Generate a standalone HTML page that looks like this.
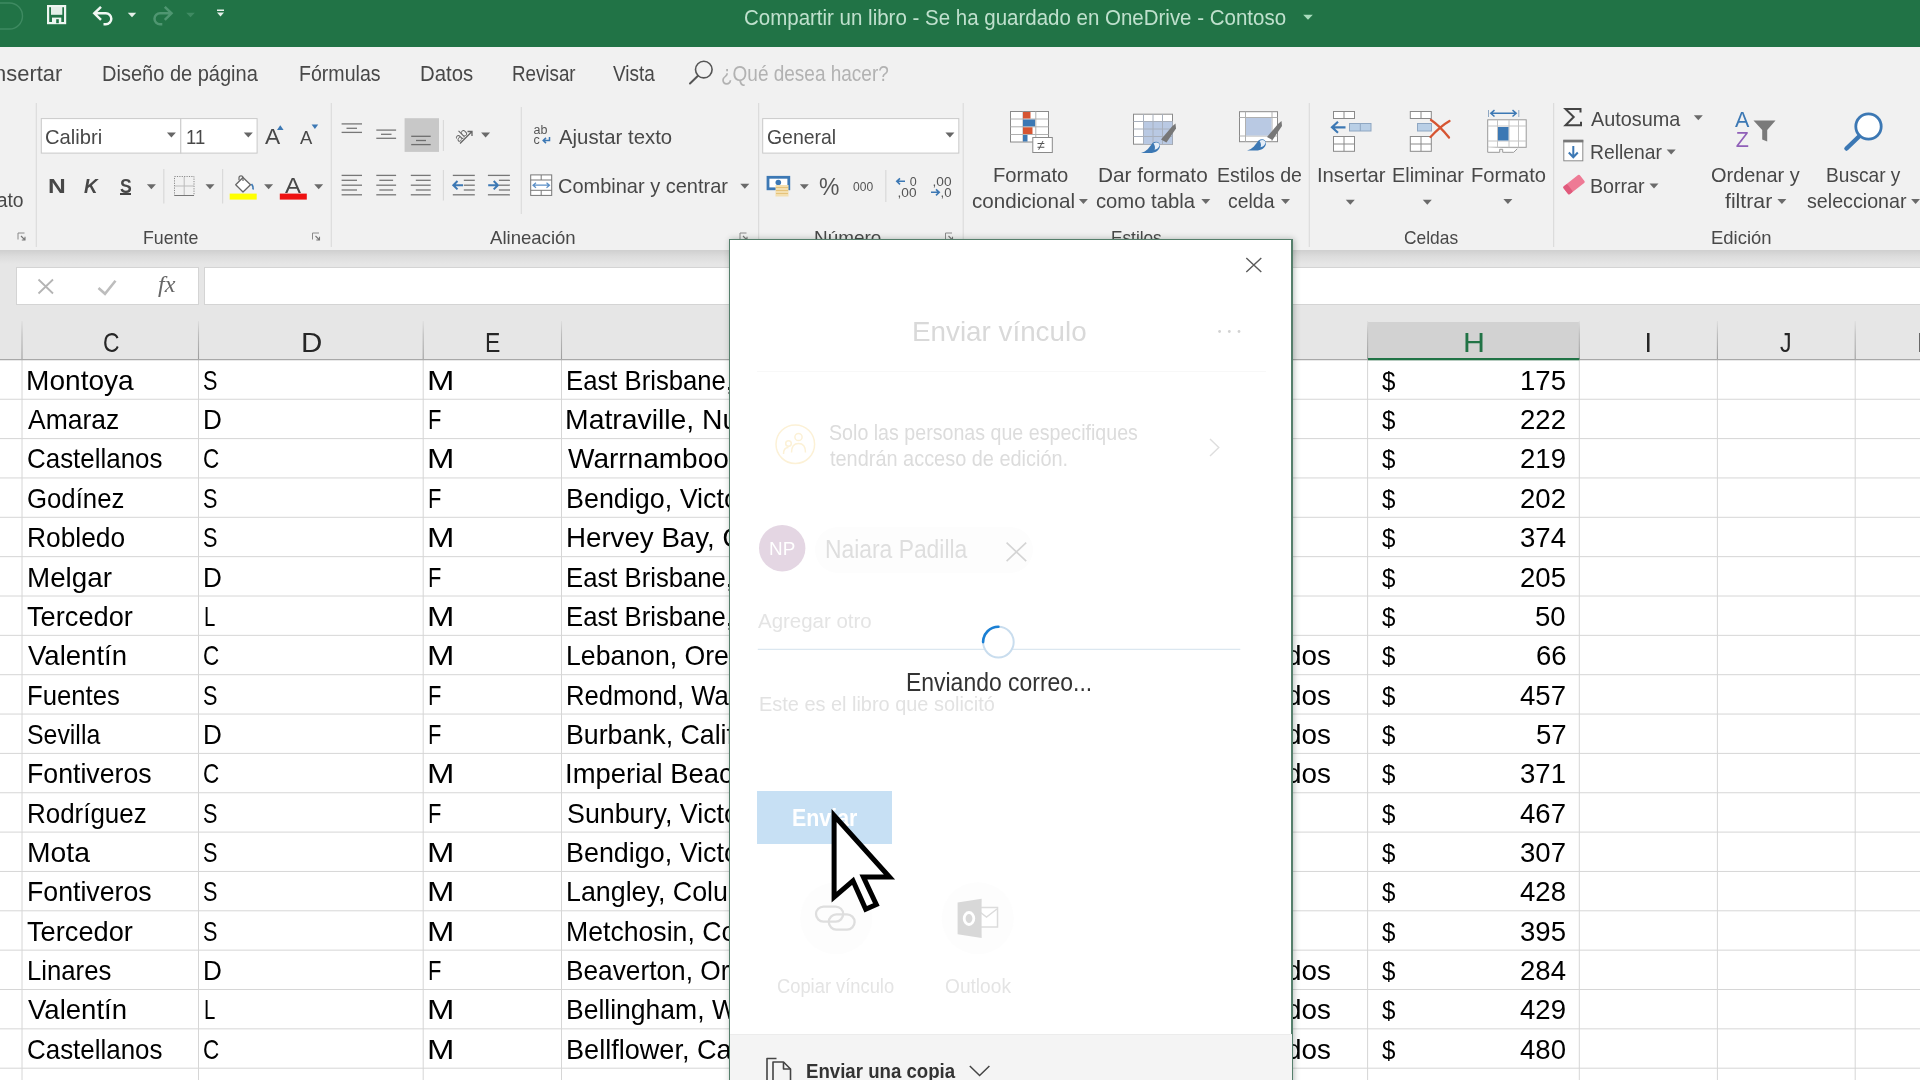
<!DOCTYPE html>
<html lang="es"><head><meta charset="utf-8"><title>Compartir un libro - Excel</title><style>
    html,body{margin:0;padding:0;background:#fff}
    body{width:1920px;height:1080px;overflow:hidden;position:relative;font-family:"Liberation Sans",sans-serif}
    #app{position:absolute;left:0;top:0;width:1920px;height:1080px;overflow:hidden;will-change:transform}
    .b{position:absolute;display:block}
    .t{position:absolute;white-space:nowrap;line-height:1;transform-origin:0 0;font-family:"Liberation Sans",sans-serif}
    </style></head>
<body>
<div id="app">
<div class="b" style="left:0;top:0;width:1920px;height:47px;background:#217346"></div>
<div class="b" style="left:0;top:47px;width:1920px;height:203px;background:#f1f1f1"></div>
<div class="b" style="left:0;top:250px;width:1920px;height:14px;background:linear-gradient(#cfcfcf,#dcdcdc 45%,#e6e6e6)"></div>
<div class="b" style="left:0;top:264px;width:1920px;height:96px;background:#e6e6e6"></div>
<div class="b" style="left:16.4px;top:266.9px;width:182.2px;height:38.5px;background:#fff;box-shadow:0 0 0 1px #d4d4d4 inset"></div>
<div class="b" style="left:204px;top:266.9px;width:1720px;height:38.5px;background:#fff;box-shadow:0 0 0 1px #d4d4d4 inset"></div>
<div class="b" style="left:1368px;top:322px;width:211.5px;height:36px;background:#d2d2d2;border-bottom:2px solid #217346"></div>
<svg class="b" style="left:0;top:0" width="1920" height="1080" viewBox="0 0 1920 1080"><defs><linearGradient id="hs" x1="0" y1="0" x2="0" y2="1"><stop offset="0" stop-color="#dedede"/><stop offset="0.35" stop-color="#bdbdbd"/><stop offset="1" stop-color="#9c9c9c"/></linearGradient></defs><line x1="0.00" y1="399.25" x2="1920.00" y2="399.25" stroke="#d6d6d6" stroke-width="1" /><line x1="0.00" y1="438.60" x2="1920.00" y2="438.60" stroke="#d6d6d6" stroke-width="1" /><line x1="0.00" y1="477.95" x2="1920.00" y2="477.95" stroke="#d6d6d6" stroke-width="1" /><line x1="0.00" y1="517.30" x2="1920.00" y2="517.30" stroke="#d6d6d6" stroke-width="1" /><line x1="0.00" y1="556.65" x2="1920.00" y2="556.65" stroke="#d6d6d6" stroke-width="1" /><line x1="0.00" y1="596.00" x2="1920.00" y2="596.00" stroke="#d6d6d6" stroke-width="1" /><line x1="0.00" y1="635.35" x2="1920.00" y2="635.35" stroke="#d6d6d6" stroke-width="1" /><line x1="0.00" y1="674.70" x2="1920.00" y2="674.70" stroke="#d6d6d6" stroke-width="1" /><line x1="0.00" y1="714.05" x2="1920.00" y2="714.05" stroke="#d6d6d6" stroke-width="1" /><line x1="0.00" y1="753.40" x2="1920.00" y2="753.40" stroke="#d6d6d6" stroke-width="1" /><line x1="0.00" y1="792.75" x2="1920.00" y2="792.75" stroke="#d6d6d6" stroke-width="1" /><line x1="0.00" y1="832.10" x2="1920.00" y2="832.10" stroke="#d6d6d6" stroke-width="1" /><line x1="0.00" y1="871.45" x2="1920.00" y2="871.45" stroke="#d6d6d6" stroke-width="1" /><line x1="0.00" y1="910.80" x2="1920.00" y2="910.80" stroke="#d6d6d6" stroke-width="1" /><line x1="0.00" y1="950.15" x2="1920.00" y2="950.15" stroke="#d6d6d6" stroke-width="1" /><line x1="0.00" y1="989.50" x2="1920.00" y2="989.50" stroke="#d6d6d6" stroke-width="1" /><line x1="0.00" y1="1028.85" x2="1920.00" y2="1028.85" stroke="#d6d6d6" stroke-width="1" /><line x1="0.00" y1="1068.20" x2="1920.00" y2="1068.20" stroke="#d6d6d6" stroke-width="1" /><line x1="22.00" y1="359.50" x2="22.00" y2="1080.00" stroke="#d6d6d6" stroke-width="1" /><rect x="21.45" y="321" width="1.1" height="38.6" fill="url(#hs)"/><line x1="198.50" y1="359.50" x2="198.50" y2="1080.00" stroke="#d6d6d6" stroke-width="1" /><rect x="197.95" y="321" width="1.1" height="38.6" fill="url(#hs)"/><line x1="423.20" y1="359.50" x2="423.20" y2="1080.00" stroke="#d6d6d6" stroke-width="1" /><rect x="422.65" y="321" width="1.1" height="38.6" fill="url(#hs)"/><line x1="561.50" y1="359.50" x2="561.50" y2="1080.00" stroke="#d6d6d6" stroke-width="1" /><rect x="560.95" y="321" width="1.1" height="38.6" fill="url(#hs)"/><line x1="1367.60" y1="359.50" x2="1367.60" y2="1080.00" stroke="#d6d6d6" stroke-width="1" /><rect x="1367.05" y="321" width="1.1" height="38.6" fill="url(#hs)"/><line x1="1579.30" y1="359.50" x2="1579.30" y2="1080.00" stroke="#d6d6d6" stroke-width="1" /><rect x="1578.75" y="321" width="1.1" height="38.6" fill="url(#hs)"/><line x1="1717.40" y1="359.50" x2="1717.40" y2="1080.00" stroke="#d6d6d6" stroke-width="1" /><rect x="1716.85" y="321" width="1.1" height="38.6" fill="url(#hs)"/><line x1="1855.20" y1="359.50" x2="1855.20" y2="1080.00" stroke="#d6d6d6" stroke-width="1" /><rect x="1854.65" y="321" width="1.1" height="38.6" fill="url(#hs)"/><line x1="0.00" y1="359.60" x2="1920.00" y2="359.60" stroke="#a8a8a8" stroke-width="1.3" /><line x1="1368.00" y1="359.30" x2="1579.30" y2="359.30" stroke="#217346" stroke-width="2" /></svg>
<span class="t" style="left:102.56px;top:330.00px;font-size:27.03px;color:#262626;transform:scaleX(0.8446);">C</span>
<span class="t" style="left:300.78px;top:330.00px;font-size:27.03px;color:#262626;transform:scaleX(1.0916);">D</span>
<span class="t" style="left:484.81px;top:330.00px;font-size:27.03px;color:#262626;transform:scaleX(0.8515);">E</span>
<span class="t" style="left:1463.21px;top:330.00px;font-size:27.03px;color:#217346;transform:scaleX(1.1249);">H</span>
<span class="t" style="left:1644.41px;top:330.00px;font-size:27.03px;color:#262626;transform:scaleX(1.0000);">I</span>
<span class="t" style="left:1780.35px;top:330.00px;font-size:27.03px;color:#262626;transform:scaleX(0.8550);">J</span>
<span class="t" style="left:1916.84px;top:330.00px;font-size:27.03px;color:#262626;transform:scaleX(1.0633);">K</span>
<span class="t" style="left:26.40px;top:368.00px;font-size:27.03px;color:#000;transform:scaleX(1.0395);">Montoya</span>
<span class="t" style="left:202.73px;top:368.00px;font-size:27.03px;color:#000;transform:scaleX(0.8013);">S</span>
<span class="t" style="left:427.00px;top:368.00px;font-size:27.03px;color:#000;transform:scaleX(1.2164);">M</span>
<span class="t" style="left:565.69px;top:368.00px;font-size:27.03px;color:#000;transform:scaleX(0.9504);">East Brisbane,</span>
<span class="t" style="left:1381.96px;top:368.00px;font-size:26.50px;color:#000;transform:scaleX(0.9096);">$</span>
<span class="t" style="left:1520.23px;top:368.00px;font-size:27.03px;color:#000;transform:scaleX(1.0200);">175</span>
<span class="t" style="left:27.65px;top:407.00px;font-size:27.03px;color:#000;transform:scaleX(0.9798);">Amaraz</span>
<span class="t" style="left:202.56px;top:407.00px;font-size:27.03px;color:#000;transform:scaleX(0.9668);">D</span>
<span class="t" style="left:428.41px;top:407.00px;font-size:27.03px;color:#000;transform:scaleX(0.8094);">F</span>
<span class="t" style="left:565.47px;top:407.00px;font-size:27.03px;color:#000;transform:scaleX(1.0499);">Matraville, Nu</span>
<span class="t" style="left:1381.96px;top:407.00px;font-size:26.50px;color:#000;transform:scaleX(0.9096);">$</span>
<span class="t" style="left:1520.48px;top:407.00px;font-size:27.03px;color:#000;transform:scaleX(1.0200);">222</span>
<span class="t" style="left:27.00px;top:446.00px;font-size:27.03px;color:#000;transform:scaleX(0.9595);">Castellanos</span>
<span class="t" style="left:203.07px;top:446.00px;font-size:27.03px;color:#000;transform:scaleX(0.8330);">C</span>
<span class="t" style="left:427.00px;top:446.00px;font-size:27.03px;color:#000;transform:scaleX(1.2164);">M</span>
<span class="t" style="left:567.69px;top:446.00px;font-size:27.03px;color:#000;transform:scaleX(1.0367);">Warrnamboo</span>
<span class="t" style="left:1381.96px;top:446.00px;font-size:26.50px;color:#000;transform:scaleX(0.9096);">$</span>
<span class="t" style="left:1520.40px;top:446.00px;font-size:27.03px;color:#000;transform:scaleX(1.0200);">219</span>
<span class="t" style="left:27.01px;top:486.00px;font-size:27.03px;color:#000;transform:scaleX(0.9536);">Godínez</span>
<span class="t" style="left:202.73px;top:486.00px;font-size:27.03px;color:#000;transform:scaleX(0.8013);">S</span>
<span class="t" style="left:428.41px;top:486.00px;font-size:27.03px;color:#000;transform:scaleX(0.8094);">F</span>
<span class="t" style="left:565.59px;top:486.00px;font-size:27.03px;color:#000;transform:scaleX(0.9954);">Bendigo, Victo</span>
<span class="t" style="left:1381.96px;top:486.00px;font-size:26.50px;color:#000;transform:scaleX(0.9096);">$</span>
<span class="t" style="left:1520.48px;top:486.00px;font-size:27.03px;color:#000;transform:scaleX(1.0200);">202</span>
<span class="t" style="left:27.14px;top:525.00px;font-size:27.03px;color:#000;transform:scaleX(0.9745);">Robledo</span>
<span class="t" style="left:202.73px;top:525.00px;font-size:27.03px;color:#000;transform:scaleX(0.8013);">S</span>
<span class="t" style="left:427.00px;top:525.00px;font-size:27.03px;color:#000;transform:scaleX(1.2164);">M</span>
<span class="t" style="left:565.53px;top:525.00px;font-size:27.03px;color:#000;transform:scaleX(1.0250);">Hervey Bay, Q</span>
<span class="t" style="left:1381.96px;top:525.00px;font-size:26.50px;color:#000;transform:scaleX(0.9096);">$</span>
<span class="t" style="left:1519.90px;top:525.00px;font-size:27.03px;color:#000;transform:scaleX(1.0200);">374</span>
<span class="t" style="left:27.02px;top:565.00px;font-size:27.03px;color:#000;transform:scaleX(1.0288);">Melgar</span>
<span class="t" style="left:202.56px;top:565.00px;font-size:27.03px;color:#000;transform:scaleX(0.9668);">D</span>
<span class="t" style="left:428.41px;top:565.00px;font-size:27.03px;color:#000;transform:scaleX(0.8094);">F</span>
<span class="t" style="left:565.69px;top:565.00px;font-size:27.03px;color:#000;transform:scaleX(0.9504);">East Brisbane,</span>
<span class="t" style="left:1381.96px;top:565.00px;font-size:26.50px;color:#000;transform:scaleX(0.9096);">$</span>
<span class="t" style="left:1520.23px;top:565.00px;font-size:27.03px;color:#000;transform:scaleX(1.0200);">205</span>
<span class="t" style="left:27.10px;top:604.00px;font-size:27.03px;color:#000;transform:scaleX(1.0071);">Tercedor</span>
<span class="t" style="left:203.53px;top:604.00px;font-size:27.03px;color:#000;transform:scaleX(0.7549);">L</span>
<span class="t" style="left:427.00px;top:604.00px;font-size:27.03px;color:#000;transform:scaleX(1.2164);">M</span>
<span class="t" style="left:565.69px;top:604.00px;font-size:27.03px;color:#000;transform:scaleX(0.9504);">East Brisbane,</span>
<span class="t" style="left:1381.96px;top:604.00px;font-size:26.50px;color:#000;transform:scaleX(0.9096);">$</span>
<span class="t" style="left:1535.48px;top:604.00px;font-size:27.03px;color:#000;transform:scaleX(1.0200);">50</span>
<span class="t" style="left:27.59px;top:643.00px;font-size:27.03px;color:#000;transform:scaleX(1.0194);">Valentín</span>
<span class="t" style="left:203.07px;top:643.00px;font-size:27.03px;color:#000;transform:scaleX(0.8330);">C</span>
<span class="t" style="left:427.00px;top:643.00px;font-size:27.03px;color:#000;transform:scaleX(1.2164);">M</span>
<span class="t" style="left:565.61px;top:643.00px;font-size:27.03px;color:#000;transform:scaleX(0.9862);">Lebanon, Ore</span>
<span class="t" style="left:1381.96px;top:643.00px;font-size:26.50px;color:#000;transform:scaleX(0.9096);">$</span>
<span class="t" style="left:1535.62px;top:643.00px;font-size:27.03px;color:#000;transform:scaleX(1.0200);">66</span>
<span class="t" style="left:1285.81px;top:643.00px;font-size:27.03px;color:#000;transform:scaleX(1.0300);">dos</span>
<span class="t" style="left:27.19px;top:683.00px;font-size:27.03px;color:#000;transform:scaleX(0.9515);">Fuentes</span>
<span class="t" style="left:202.73px;top:683.00px;font-size:27.03px;color:#000;transform:scaleX(0.8013);">S</span>
<span class="t" style="left:428.41px;top:683.00px;font-size:27.03px;color:#000;transform:scaleX(0.8094);">F</span>
<span class="t" style="left:565.70px;top:683.00px;font-size:27.03px;color:#000;transform:scaleX(0.9480);">Redmond, Wa</span>
<span class="t" style="left:1381.96px;top:683.00px;font-size:26.50px;color:#000;transform:scaleX(0.9096);">$</span>
<span class="t" style="left:1520.48px;top:683.00px;font-size:27.03px;color:#000;transform:scaleX(1.0200);">457</span>
<span class="t" style="left:1285.81px;top:683.00px;font-size:27.03px;color:#000;transform:scaleX(1.0300);">dos</span>
<span class="t" style="left:26.58px;top:722.00px;font-size:27.03px;color:#000;transform:scaleX(0.9203);">Sevilla</span>
<span class="t" style="left:202.56px;top:722.00px;font-size:27.03px;color:#000;transform:scaleX(0.9668);">D</span>
<span class="t" style="left:428.41px;top:722.00px;font-size:27.03px;color:#000;transform:scaleX(0.8094);">F</span>
<span class="t" style="left:565.61px;top:722.00px;font-size:27.03px;color:#000;transform:scaleX(0.9901);">Burbank, Calif</span>
<span class="t" style="left:1381.96px;top:722.00px;font-size:26.50px;color:#000;transform:scaleX(0.9096);">$</span>
<span class="t" style="left:1535.81px;top:722.00px;font-size:27.03px;color:#000;transform:scaleX(1.0200);">57</span>
<span class="t" style="left:1285.81px;top:722.00px;font-size:27.03px;color:#000;transform:scaleX(1.0300);">dos</span>
<span class="t" style="left:27.11px;top:761.00px;font-size:27.03px;color:#000;transform:scaleX(0.9885);">Fontiveros</span>
<span class="t" style="left:203.07px;top:761.00px;font-size:27.03px;color:#000;transform:scaleX(0.8330);">C</span>
<span class="t" style="left:427.00px;top:761.00px;font-size:27.03px;color:#000;transform:scaleX(1.2164);">M</span>
<span class="t" style="left:565.27px;top:761.00px;font-size:27.03px;color:#000;transform:scaleX(1.0160);">Imperial Beac</span>
<span class="t" style="left:1381.96px;top:761.00px;font-size:26.50px;color:#000;transform:scaleX(0.9096);">$</span>
<span class="t" style="left:1520.43px;top:761.00px;font-size:27.03px;color:#000;transform:scaleX(1.0200);">371</span>
<span class="t" style="left:1285.81px;top:761.00px;font-size:27.03px;color:#000;transform:scaleX(1.0300);">dos</span>
<span class="t" style="left:27.17px;top:801.00px;font-size:27.03px;color:#000;transform:scaleX(0.9596);">Rodríguez</span>
<span class="t" style="left:202.73px;top:801.00px;font-size:27.03px;color:#000;transform:scaleX(0.8013);">S</span>
<span class="t" style="left:428.41px;top:801.00px;font-size:27.03px;color:#000;transform:scaleX(0.8094);">F</span>
<span class="t" style="left:566.59px;top:801.00px;font-size:27.03px;color:#000;transform:scaleX(0.9925);">Sunbury, Victo</span>
<span class="t" style="left:1381.96px;top:801.00px;font-size:26.50px;color:#000;transform:scaleX(0.9096);">$</span>
<span class="t" style="left:1520.48px;top:801.00px;font-size:27.03px;color:#000;transform:scaleX(1.0200);">467</span>
<span class="t" style="left:26.98px;top:840.00px;font-size:27.03px;color:#000;transform:scaleX(1.0465);">Mota</span>
<span class="t" style="left:202.73px;top:840.00px;font-size:27.03px;color:#000;transform:scaleX(0.8013);">S</span>
<span class="t" style="left:427.00px;top:840.00px;font-size:27.03px;color:#000;transform:scaleX(1.2164);">M</span>
<span class="t" style="left:565.59px;top:840.00px;font-size:27.03px;color:#000;transform:scaleX(0.9954);">Bendigo, Victo</span>
<span class="t" style="left:1381.96px;top:840.00px;font-size:26.50px;color:#000;transform:scaleX(0.9096);">$</span>
<span class="t" style="left:1520.48px;top:840.00px;font-size:27.03px;color:#000;transform:scaleX(1.0200);">307</span>
<span class="t" style="left:27.11px;top:879.00px;font-size:27.03px;color:#000;transform:scaleX(0.9885);">Fontiveros</span>
<span class="t" style="left:202.73px;top:879.00px;font-size:27.03px;color:#000;transform:scaleX(0.8013);">S</span>
<span class="t" style="left:427.00px;top:879.00px;font-size:27.03px;color:#000;transform:scaleX(1.2164);">M</span>
<span class="t" style="left:565.60px;top:879.00px;font-size:27.03px;color:#000;transform:scaleX(0.9924);">Langley, Colum</span>
<span class="t" style="left:1381.96px;top:879.00px;font-size:26.50px;color:#000;transform:scaleX(0.9096);">$</span>
<span class="t" style="left:1520.29px;top:879.00px;font-size:27.03px;color:#000;transform:scaleX(1.0200);">428</span>
<span class="t" style="left:27.10px;top:919.00px;font-size:27.03px;color:#000;transform:scaleX(1.0071);">Tercedor</span>
<span class="t" style="left:202.73px;top:919.00px;font-size:27.03px;color:#000;transform:scaleX(0.8013);">S</span>
<span class="t" style="left:427.00px;top:919.00px;font-size:27.03px;color:#000;transform:scaleX(1.2164);">M</span>
<span class="t" style="left:565.61px;top:919.00px;font-size:27.03px;color:#000;transform:scaleX(0.9862);">Metchosin, Co</span>
<span class="t" style="left:1381.96px;top:919.00px;font-size:26.50px;color:#000;transform:scaleX(0.9096);">$</span>
<span class="t" style="left:1520.23px;top:919.00px;font-size:27.03px;color:#000;transform:scaleX(1.0200);">395</span>
<span class="t" style="left:27.19px;top:958.00px;font-size:27.03px;color:#000;transform:scaleX(0.9511);">Linares</span>
<span class="t" style="left:202.56px;top:958.00px;font-size:27.03px;color:#000;transform:scaleX(0.9668);">D</span>
<span class="t" style="left:428.41px;top:958.00px;font-size:27.03px;color:#000;transform:scaleX(0.8094);">F</span>
<span class="t" style="left:565.65px;top:958.00px;font-size:27.03px;color:#000;transform:scaleX(0.9719);">Beaverton, Or</span>
<span class="t" style="left:1381.96px;top:958.00px;font-size:26.50px;color:#000;transform:scaleX(0.9096);">$</span>
<span class="t" style="left:1519.90px;top:958.00px;font-size:27.03px;color:#000;transform:scaleX(1.0200);">284</span>
<span class="t" style="left:1285.81px;top:958.00px;font-size:27.03px;color:#000;transform:scaleX(1.0300);">dos</span>
<span class="t" style="left:27.59px;top:997.00px;font-size:27.03px;color:#000;transform:scaleX(1.0194);">Valentín</span>
<span class="t" style="left:203.53px;top:997.00px;font-size:27.03px;color:#000;transform:scaleX(0.7549);">L</span>
<span class="t" style="left:427.00px;top:997.00px;font-size:27.03px;color:#000;transform:scaleX(1.2164);">M</span>
<span class="t" style="left:565.62px;top:997.00px;font-size:27.03px;color:#000;transform:scaleX(0.9816);">Bellingham, W</span>
<span class="t" style="left:1381.96px;top:997.00px;font-size:26.50px;color:#000;transform:scaleX(0.9096);">$</span>
<span class="t" style="left:1520.40px;top:997.00px;font-size:27.03px;color:#000;transform:scaleX(1.0200);">429</span>
<span class="t" style="left:1285.81px;top:997.00px;font-size:27.03px;color:#000;transform:scaleX(1.0300);">dos</span>
<span class="t" style="left:27.00px;top:1037.00px;font-size:27.03px;color:#000;transform:scaleX(0.9595);">Castellanos</span>
<span class="t" style="left:203.07px;top:1037.00px;font-size:27.03px;color:#000;transform:scaleX(0.8330);">C</span>
<span class="t" style="left:427.00px;top:1037.00px;font-size:27.03px;color:#000;transform:scaleX(1.2164);">M</span>
<span class="t" style="left:565.58px;top:1037.00px;font-size:27.03px;color:#000;transform:scaleX(1.0026);">Bellflower, Ca</span>
<span class="t" style="left:1381.96px;top:1037.00px;font-size:26.50px;color:#000;transform:scaleX(0.9096);">$</span>
<span class="t" style="left:1520.15px;top:1037.00px;font-size:27.03px;color:#000;transform:scaleX(1.0200);">480</span>
<span class="t" style="left:1285.81px;top:1037.00px;font-size:27.03px;color:#000;transform:scaleX(1.0300);">dos</span>
<svg class="b" style="left:0;top:0" width="1920" height="260" viewBox="0 0 1920 260"><rect x="-30" y="3" width="52.5" height="26" rx="13" fill="none" stroke="#3e8a61" stroke-width="1.4"/><rect x="48.1" y="6.1" width="17" height="17" fill="none" stroke="#eef6f1" stroke-width="2.2"/><rect x="51" y="7" width="11.300" height="7.800" fill="#e3efe8"/><rect x="52" y="17.600" width="9.300" height="5.500" fill="#eef6f1"/><rect x="56.200" y="19.200" width="2.600" height="4" fill="#217346"/><path d="M101 6.800L94.300 13.300 101 19.800M95 13.300h10.800a5.500 5.500 0 0 1 0 11h-2.300" fill="none" stroke="#f2f8f4" stroke-width="2.500" stroke-linecap="butt" stroke-linejoin="miter"/><polygon points="127.8,12.8 136.2,12.8 132.0,17.2" fill="#e6f0ea"/><path d="M164.800 6.800l6.700 6.500-6.700 6.500M170.800 13.300h-10.800a5.500 5.500 0 0 0 0 11h2.300" fill="none" stroke="#4f9671" stroke-width="2.500"/><polygon points="186.2,12.8 194.8,12.8 190.5,17.2" fill="#3f8a62"/><rect x="217.00" y="9.50" width="7.00" height="1.50" fill="#e6f0ea" /><polygon points="217.0,12.5 224.0,12.5 220.5,16.5" fill="#e6f0ea"/><polygon points="1303.2,14.7 1312.8,14.7 1308.0,19.7" fill="#a9dcbd"/><circle cx="703.8" cy="69.6" r="8.3" fill="none" stroke="#555" stroke-width="1.6"/><path d="M698 75.8L690 83.5" stroke="#555" stroke-width="2" stroke-linecap="round"/><line x1="36.30" y1="103.00" x2="36.30" y2="247.00" stroke="#dcdcdc" stroke-width="1.2" /><line x1="331.30" y1="103.00" x2="331.30" y2="247.00" stroke="#dcdcdc" stroke-width="1.2" /><line x1="758.60" y1="103.00" x2="758.60" y2="247.00" stroke="#dcdcdc" stroke-width="1.2" /><line x1="963.20" y1="103.00" x2="963.20" y2="247.00" stroke="#dcdcdc" stroke-width="1.2" /><line x1="1309.30" y1="103.00" x2="1309.30" y2="247.00" stroke="#dcdcdc" stroke-width="1.2" /><line x1="1553.60" y1="103.00" x2="1553.60" y2="247.00" stroke="#dcdcdc" stroke-width="1.2" /><line x1="521.30" y1="107.00" x2="521.30" y2="214.00" stroke="#dcdcdc" stroke-width="1.2" /><line x1="163.80" y1="169.00" x2="163.80" y2="203.50" stroke="#dadada" stroke-width="1.2" /><line x1="222.60" y1="169.00" x2="222.60" y2="203.50" stroke="#dadada" stroke-width="1.2" /><line x1="443.40" y1="120.00" x2="443.40" y2="151.00" stroke="#dadada" stroke-width="1.2" /><line x1="443.40" y1="170.00" x2="443.40" y2="200.50" stroke="#dadada" stroke-width="1.2" /><line x1="885.80" y1="170.00" x2="885.80" y2="202.00" stroke="#dadada" stroke-width="1.2" /><rect x="41.3" y="118.6" width="139.5" height="34.5" fill="#fff" stroke="#c9c9c9" stroke-width="1"/><rect x="180.8" y="118.6" width="76.3" height="34.5" fill="#fff" stroke="#c9c9c9" stroke-width="1"/><rect x="762.7" y="118.6" width="196.1" height="34.5" fill="#fff" stroke="#c9c9c9" stroke-width="1"/><polygon points="166.9,132.5 175.9,132.5 171.4,137.5" fill="#666"/><polygon points="243.8,132.5 252.8,132.5 248.3,137.5" fill="#666"/><polygon points="945.4,132.5 954.4,132.5 949.9,137.5" fill="#666"/><polygon points="146.9,184.3 155.9,184.3 151.4,189.3" fill="#6a6a6a"/><polygon points="205.5,184.3 214.5,184.3 210.0,189.3" fill="#6a6a6a"/><polygon points="264.1,184.3 273.1,184.3 268.6,189.3" fill="#6a6a6a"/><polygon points="314.2,184.3 323.2,184.3 318.7,189.3" fill="#6a6a6a"/><polygon points="481.1,132.4 490.1,132.4 485.6,137.4" fill="#6a6a6a"/><polygon points="740.3,183.7 749.3,183.7 744.8,188.7" fill="#6a6a6a"/><polygon points="799.8,184.3 808.8,184.3 804.3,189.3" fill="#6a6a6a"/><polygon points="1078.9,199.0 1087.9,199.0 1083.4,204.0" fill="#6a6a6a"/><polygon points="1201.3,199.0 1210.3,199.0 1205.8,204.0" fill="#6a6a6a"/><polygon points="1281.0,199.0 1290.0,199.0 1285.5,204.0" fill="#6a6a6a"/><polygon points="1345.8,199.7 1354.8,199.7 1350.3,204.7" fill="#6a6a6a"/><polygon points="1422.8,199.7 1431.8,199.7 1427.3,204.7" fill="#6a6a6a"/><polygon points="1503.4,199.0 1512.4,199.0 1507.9,204.0" fill="#6a6a6a"/><polygon points="1693.8,115.2 1702.8,115.2 1698.3,120.2" fill="#6a6a6a"/><polygon points="1666.7,149.4 1675.7,149.4 1671.2,154.4" fill="#6a6a6a"/><polygon points="1649.5,183.4 1658.5,183.4 1654.0,188.4" fill="#6a6a6a"/><polygon points="1777.4,199.0 1786.4,199.0 1781.9,204.0" fill="#6a6a6a"/><polygon points="1911.1,199.0 1920.1,199.0 1915.6,204.0" fill="#6a6a6a"/><polygon points="277,130 283.6,130 280.3,125.3" fill="#3c78b4"/><polygon points="311.6,124.5 318.2,124.5 314.9,129" fill="#3c78b4"/><g fill="none" stroke="#8a8a8a" stroke-width="1"><rect x="174.5" y="176.5" width="19.5" height="19" stroke-dasharray="1.2 1.2"/><path d="M184.2 177v18.5M175 186h19" stroke="#bbb"/><path d="M174.5 195.5h19.5" stroke="#777"/></g><rect x="229.70" y="193.60" width="27.00" height="6.00" fill="#ffff00" /><g fill="#fff" stroke="#666" stroke-width="1.3" stroke-linejoin="round"><path d="M243 177.5l7.5 7.2-7.5 7.3-7.3-7.3z"/></g><path d="M243 181v-3.2a2 2 0 0 0-4 0v2.4" fill="none" stroke="#666" stroke-width="1.2"/><path d="M251.5 184c1.4 1.6 2 3 1.6 5.5" fill="none" stroke="#3c78b4" stroke-width="1.8"/><rect x="279.80" y="193.60" width="27.00" height="6.00" fill="#ee1111" /><line x1="341.60" y1="123.90" x2="362.00" y2="123.90" stroke="#777" stroke-width="1.3" /><line x1="346.50" y1="128.30" x2="357.00" y2="128.30" stroke="#777" stroke-width="1.3" /><line x1="341.60" y1="132.40" x2="362.00" y2="132.40" stroke="#777" stroke-width="1.3" /><line x1="376.30" y1="130.10" x2="396.10" y2="130.10" stroke="#777" stroke-width="1.3" /><line x1="381.00" y1="134.30" x2="391.50" y2="134.30" stroke="#777" stroke-width="1.3" /><line x1="376.30" y1="138.30" x2="396.10" y2="138.30" stroke="#777" stroke-width="1.3" /><rect x="404.60" y="118.20" width="34.40" height="33.70" fill="#c8c8c8" /><line x1="411.20" y1="136.30" x2="430.70" y2="136.30" stroke="#6e6e6e" stroke-width="1.3" /><line x1="416.00" y1="140.50" x2="426.00" y2="140.50" stroke="#6e6e6e" stroke-width="1.3" /><line x1="411.20" y1="144.60" x2="430.70" y2="144.60" stroke="#6e6e6e" stroke-width="1.3" /><line x1="341.60" y1="175.40" x2="362.00" y2="175.40" stroke="#777" stroke-width="1.3" /><line x1="376.30" y1="175.40" x2="396.10" y2="175.40" stroke="#777" stroke-width="1.3" /><line x1="410.80" y1="175.40" x2="430.70" y2="175.40" stroke="#777" stroke-width="1.3" /><line x1="341.60" y1="180.30" x2="357.00" y2="180.30" stroke="#777" stroke-width="1.3" /><line x1="379.30" y1="180.30" x2="393.10" y2="180.30" stroke="#777" stroke-width="1.3" /><line x1="415.80" y1="180.30" x2="430.70" y2="180.30" stroke="#777" stroke-width="1.3" /><line x1="341.60" y1="185.20" x2="362.00" y2="185.20" stroke="#777" stroke-width="1.3" /><line x1="376.30" y1="185.20" x2="396.10" y2="185.20" stroke="#777" stroke-width="1.3" /><line x1="410.80" y1="185.20" x2="430.70" y2="185.20" stroke="#777" stroke-width="1.3" /><line x1="341.60" y1="190.00" x2="357.00" y2="190.00" stroke="#777" stroke-width="1.3" /><line x1="379.30" y1="190.00" x2="393.10" y2="190.00" stroke="#777" stroke-width="1.3" /><line x1="415.80" y1="190.00" x2="430.70" y2="190.00" stroke="#777" stroke-width="1.3" /><line x1="341.60" y1="194.80" x2="362.00" y2="194.80" stroke="#777" stroke-width="1.3" /><line x1="376.30" y1="194.80" x2="396.10" y2="194.80" stroke="#777" stroke-width="1.3" /><line x1="410.80" y1="194.80" x2="430.70" y2="194.80" stroke="#777" stroke-width="1.3" /><line x1="452.80" y1="175.40" x2="474.80" y2="175.40" stroke="#777" stroke-width="1.3" /><line x1="452.80" y1="194.80" x2="474.80" y2="194.80" stroke="#777" stroke-width="1.3" /><line x1="463.80" y1="180.30" x2="474.80" y2="180.30" stroke="#777" stroke-width="1.3" /><line x1="463.80" y1="185.20" x2="474.80" y2="185.20" stroke="#777" stroke-width="1.3" /><line x1="463.80" y1="190.00" x2="474.80" y2="190.00" stroke="#777" stroke-width="1.3" /><line x1="487.90" y1="175.40" x2="509.90" y2="175.40" stroke="#777" stroke-width="1.3" /><line x1="487.90" y1="194.80" x2="509.90" y2="194.80" stroke="#777" stroke-width="1.3" /><line x1="498.90" y1="180.30" x2="509.90" y2="180.30" stroke="#777" stroke-width="1.3" /><line x1="498.90" y1="185.20" x2="509.90" y2="185.20" stroke="#777" stroke-width="1.3" /><line x1="498.90" y1="190.00" x2="509.90" y2="190.00" stroke="#777" stroke-width="1.3" /><path d="M463 185.2h-9.5m4-4.2l-4.2 4.2 4.2 4.2" fill="none" stroke="#3c78b4" stroke-width="2"/><path d="M488.2 185.2h9.5m-4-4.2l4.2 4.2-4.2 4.2" fill="none" stroke="#3c78b4" stroke-width="2"/><g transform="translate(464,135) rotate(-45)"><text x="-9" y="2" font-family="Liberation Sans, sans-serif" font-size="12" fill="#666">ab</text></g><path d="M460 143.5l12-12m-4.5 0h4.5v4.5" fill="none" stroke="#666" stroke-width="1.3"/><text x="533.6" y="134" font-family="Liberation Sans, sans-serif" font-size="12.5" fill="#555">ab</text><text x="533.6" y="144.3" font-family="Liberation Sans, sans-serif" font-size="12.5" fill="#555">c</text><path d="M549.5 137v3.5h-6m2.5-2.6l-2.8 2.6 2.8 2.6" fill="none" stroke="#3c78b4" stroke-width="1.5"/><g fill="#fff" stroke="#777" stroke-width="1"><rect x="530.7" y="174.9" width="21" height="20.5"/><path d="M530.7 180h21M530.7 190.3h21M541.2 175v5M541.2 190.3v5" fill="none"/></g><path d="M533 185.2h16.5m-13.5-2.5l-3 2.5 3 2.5m10.5-5l3 2.5-3 2.5" fill="none" stroke="#5b8fc7" stroke-width="1.2"/><rect x="768" y="177.300" width="20.800" height="11.500" fill="#fff" stroke="#3c78b4" stroke-width="2.800"/><circle cx="778.3" cy="182.5" r="2.8" fill="#3c78b4"/><rect x="775.5" y="185" width="13" height="11.5" fill="#f3dfb0"/><path d="M776 187.5h12M776 190.5h12M776 193.5h12" stroke="#e6c37a" stroke-width="1.2"/><text x="909.800" y="186.300" font-family="Liberation Sans, sans-serif" font-size="12.5" fill="#555">0</text><text x="897.500" y="197.200" font-family="Liberation Sans, sans-serif" font-size="12.5" fill="#555" textLength="19" lengthAdjust="spacingAndGlyphs">,00</text><path d="M905 181.3h-8m3-3l-3.2 3 3.2 3" fill="none" stroke="#3c78b4" stroke-width="1.6"/><text x="932.500" y="186.300" font-family="Liberation Sans, sans-serif" font-size="12.5" fill="#555" textLength="19" lengthAdjust="spacingAndGlyphs">,00</text><text x="940.500" y="197.200" font-family="Liberation Sans, sans-serif" font-size="12.5" fill="#555" textLength="11" lengthAdjust="spacingAndGlyphs">,0</text><path d="M931 192.3h8m-3-3l3.2 3-3.2 3" fill="none" stroke="#3c78b4" stroke-width="1.6"/><path d="M18.0 239.5v-6.5h6.5" fill="none" stroke="#8a8a8a" stroke-width="1"/><path d="M21.0 236.0l4 4m0-3.2v3.2h-3.2" fill="none" stroke="#777" stroke-width="1.1"/><path d="M312.5 239.5v-6.5h6.5" fill="none" stroke="#8a8a8a" stroke-width="1"/><path d="M315.5 236.0l4 4m0-3.2v3.2h-3.2" fill="none" stroke="#777" stroke-width="1.1"/><path d="M740.0 239.5v-6.5h6.5" fill="none" stroke="#8a8a8a" stroke-width="1"/><path d="M743.0 236.0l4 4m0-3.2v3.2h-3.2" fill="none" stroke="#777" stroke-width="1.1"/><path d="M945.5 239.5v-6.5h6.5" fill="none" stroke="#8a8a8a" stroke-width="1"/><path d="M948.5 236.0l4 4m0-3.2v3.2h-3.2" fill="none" stroke="#777" stroke-width="1.1"/><g><rect x="1010.5" y="111.5" width="38" height="30.5" fill="#fff" stroke="#8a8a8a"/><path d="M1023 111.5v30.5M1035.8 111.5v30.5M1010.5 119h38M1010.5 126.8h38M1010.5 134.5h38" stroke="#b0b0b0" fill="none"/><rect x="1023" y="112" width="7.5" height="6.5" fill="#d65532"/><rect x="1023" y="119.5" width="12" height="6.8" fill="#3c78b4"/><rect x="1023" y="127.3" width="9.5" height="6.7" fill="#d65532"/><rect x="1023" y="135" width="4.5" height="6.5" fill="#3c78b4"/><rect x="1032.8" y="137.5" width="19.5" height="15" fill="#fff" stroke="#8a8a8a"/><text x="1037.3" y="150.3" font-family="Liberation Sans, sans-serif" font-size="14" fill="#555">≠</text></g><g><rect x="1133.5" y="114.2" width="39" height="30" fill="#fff" stroke="#8a8a8a"/><rect x="1143.5" y="121.5" width="29" height="22.7" fill="#b9c9e3"/><path d="M1143.5 114.2v30M1153 114.2v30M1162.5 114.2v30M1133.5 121.5h39M1133.5 129h39M1133.5 136.5h39" stroke="#a8b0bd" fill="none"/><path d="M1161 139.5l11-13 3.5-3 0.5 5-9.5 14z" fill="#777"/><path d="M1141 153c6-1.5 8-5.5 11.5-10 3-2.5 7.5-1.5 7.5 2.5 0 5-5 7.500-10 7.500z" fill="#3c78b4"/><path d="M1153.500 143.500c2.500-2 6-1 6.200 1.800-1 2.800-3 4.200-5.200 4.500 1-2 0.500-4.300-1-6.300z" fill="#e4edf7"/></g><g><rect x="1239.5" y="111.7" width="38" height="30" fill="#fff" stroke="#8a8a8a"/><path d="M1245.500 111.7v30M1272 111.7v30M1239.500 117.500h38M1239.500 136h38" stroke="#b0b0b0" fill="none"/><rect x="1246" y="118" width="25.500" height="17.500" fill="#b9c9e3"/><path d="M1267 137l11-13 3.500-3 0.500 5-9.500 14z" fill="#777"/><path d="M1247 150.500c6-1.500 8-5.500 11.500-10 3-2.500 7.500-1.500 7.500 2.500 0 5-5 7.500-10 7.500z" fill="#3c78b4"/><path d="M1259.500 141c2.500-2 6-1 6.200 1.800-1 2.800-3 4.200-5.200 4.500 1-2 0.500-4.300-1-6.300z" fill="#e4edf7"/></g><g fill="#fff" stroke="#8a8a8a"><rect x="1333.500" y="111.500" width="21" height="7"/><path d="M1344 111.500v7"/><rect x="1333.500" y="136.500" width="21" height="14.800"/><path d="M1344 136.500v14.800M1333.500 144h21"/><rect x="1349.500" y="123.500" width="21.500" height="7.500" fill="#b9cfe6" stroke="#8fa7c2"/><path d="M1360.300 123.500v7.500" stroke="#8fa7c2"/></g><path d="M1345.500 127.300h-13.500m6-5.500l-6 5.500 6 5.500" fill="none" stroke="#3c78b4" stroke-width="2.200"/><g fill="#fff" stroke="#8a8a8a"><rect x="1410.300" y="111.500" width="21" height="7"/><path d="M1421 111.500v7"/><rect x="1410.300" y="136.500" width="21" height="14.800"/><path d="M1421 136.500v14.800M1410.300 144h21"/><rect x="1417.500" y="123.500" width="14" height="7.500" fill="#b9cfe6" stroke="#8fa7c2"/></g><path d="M1431 120c6 4 12 10 18 17.500M1449.500 121c-7 4-13 9.500-19 16" fill="none" stroke="#d65532" stroke-width="2.300" stroke-linecap="round"/><g><rect x="1487.700" y="119.800" width="38.500" height="27.500" fill="#fff" stroke="#9a9a9a"/><path d="M1497.500 119.800v27.500M1509 119.800v27.500M1518.500 119.800v27.500M1487.700 126h38.500M1487.700 141h38.500" stroke="#c4c4c4" fill="none"/><rect x="1498" y="127" width="10.500" height="13.500" fill="#3c78b4"/><path d="M1487.700 147.300v5h12v-3h3v3h11l3.500-3.500" fill="#fff" stroke="#9a9a9a"/><path d="M1491 113.300h25m-21.500-3.200l-3.700 3.200 3.700 3.200m18-6.400l3.700 3.200-3.700 3.200" fill="none" stroke="#3c78b4" stroke-width="1.500"/><path d="M1488.500 110v7M1518.800 110v7" stroke="#8fa7c2" stroke-width="1"/></g><path d="M1580.500 112.500v-3.500h-15l8.200 8-8.200 8.300h15.500v-3.500" fill="none" stroke="#444" stroke-width="2"/><rect x="1563.800" y="140.300" width="19" height="20.500" fill="#fff" stroke="#8a8a8a"/><rect x="1563.300" y="139.800" width="20" height="2.600" fill="#777"/><path d="M1573.300 146v11m-4.500-4.500l4.500 4.800 4.500-4.800" fill="none" stroke="#3c78b4" stroke-width="2"/><g transform="translate(1574,184.600) rotate(-38)"><rect x="-10.500" y="-5" width="21" height="10" rx="1.500" fill="#ee7a95"/><rect x="-10.500" y="-5" width="5.500" height="10" rx="1.500" fill="#e05a7c"/></g><text x="1735" y="126.600" font-family="Liberation Sans, sans-serif" font-size="21.500" fill="#3c78b4">A</text><text x="1735.800" y="146.900" font-family="Liberation Sans, sans-serif" font-size="21.500" fill="#9060b8">Z</text><path d="M1753.500 120.500h22l-8.300 9.500v11.500l-5-2v-9.500z" fill="#7a7a7a"/><circle cx="1868.500" cy="126.500" r="12.700" fill="#fff" stroke="#3c78b4" stroke-width="2.800"/><path d="M1859 136.500l-12.500 12" stroke="#3c78b4" stroke-width="4.500" stroke-linecap="round"/></svg>
<span class="t" style="left:744.38px;top:7.00px;font-size:22.09px;color:#bfe0cd;transform:scaleX(0.9279);">Compartir un libro - Se ha guardado en OneDrive - Contoso</span>
<span class="t" style="left:-11.82px;top:64.00px;font-size:21.51px;color:#484848;transform:scaleX(1.0198);">Insertar</span>
<span class="t" style="left:102.26px;top:64.00px;font-size:21.51px;color:#484848;transform:scaleX(0.9312);">Diseño de página</span>
<span class="t" style="left:299.29px;top:64.00px;font-size:21.51px;color:#484848;transform:scaleX(0.9102);">Fórmulas</span>
<span class="t" style="left:420.23px;top:64.00px;font-size:21.51px;color:#484848;transform:scaleX(0.9469);">Datos</span>
<span class="t" style="left:511.86px;top:64.00px;font-size:21.51px;color:#484848;transform:scaleX(0.8727);">Revisar</span>
<span class="t" style="left:613.32px;top:64.00px;font-size:21.51px;color:#484848;transform:scaleX(0.8824);">Vista</span>
<span class="t" style="left:721.00px;top:64.00px;font-size:21.51px;color:#b2b2b2;transform:scaleX(0.8829);">¿Qué desea hacer?</span>
<span class="t" style="left:44.89px;top:127.00px;font-size:20.93px;color:#484848;transform:scaleX(0.9654);">Calibri</span>
<span class="t" style="left:186.39px;top:127.00px;font-size:20.93px;color:#484848;transform:scaleX(0.8834);">11</span>
<span class="t" style="left:264.85px;top:125.00px;font-size:22.67px;color:#484848;transform:scaleX(1.0044);">A</span>
<span class="t" style="left:299.96px;top:129.00px;font-size:18.02px;color:#484848;transform:scaleX(1.0210);">A</span>
<span class="t" style="left:48.18px;top:176.00px;font-size:20.78px;color:#484848;transform:scaleX(1.1844);font-weight:bold;">N</span>
<span class="t" style="left:83.68px;top:176.00px;font-size:20.78px;color:#484848;transform:scaleX(0.9107);font-weight:bold;font-style:italic;">K</span>
<span class="t" style="left:120.11px;top:176.00px;font-size:20.78px;color:#484848;transform:scaleX(0.8500);font-weight:bold;">S</span>
<div class="b" style="left:120px;top:193.3px;width:11.3px;height:1.4px;background:#444"></div>
<span class="t" style="left:285.25px;top:174.00px;font-size:22.67px;color:#484848;transform:scaleX(1.0577);">A</span>
<span class="t" style="left:-42.07px;top:190.00px;font-size:20.35px;color:#484848;transform:scaleX(0.9504);">formato</span>
<span class="t" style="left:143.04px;top:230.00px;font-size:17.59px;color:#484848;transform:scaleX(1.0108);">Fuente</span>
<span class="t" style="left:489.76px;top:230.00px;font-size:17.59px;color:#484848;transform:scaleX(1.0564);">Alineación</span>
<span class="t" style="left:813.65px;top:230.00px;font-size:17.59px;color:#484848;transform:scaleX(1.0763);">Número</span>
<span class="t" style="left:1111.09px;top:230.00px;font-size:17.59px;color:#484848;transform:scaleX(0.9795);">Estilos</span>
<span class="t" style="left:1403.83px;top:230.00px;font-size:17.59px;color:#484848;transform:scaleX(0.9880);">Celdas</span>
<span class="t" style="left:1710.59px;top:230.00px;font-size:17.59px;color:#484848;transform:scaleX(1.0505);">Edición</span>
<span class="t" style="left:559.16px;top:127.00px;font-size:20.93px;color:#484848;transform:scaleX(0.9729);">Ajustar texto</span>
<span class="t" style="left:558.20px;top:176.00px;font-size:20.93px;color:#484848;transform:scaleX(0.9553);">Combinar y centrar</span>
<span class="t" style="left:767.13px;top:127.00px;font-size:20.93px;color:#484848;transform:scaleX(0.9289);">General</span>
<span class="t" style="left:818.60px;top:175.00px;font-size:24.71px;color:#555;transform:scaleX(0.9290);">%</span>
<span class="t" style="left:853.43px;top:180.00px;font-size:13.66px;color:#555;transform:scaleX(0.8833);">000</span>
<span class="t" style="left:992.54px;top:165.00px;font-size:20.64px;color:#484848;transform:scaleX(0.9798);">Formato</span>
<span class="t" style="left:971.73px;top:191.00px;font-size:20.64px;color:#484848;transform:scaleX(0.9987);">condicional</span>
<span class="t" style="left:1098.00px;top:165.00px;font-size:20.64px;color:#484848;transform:scaleX(1.0074);">Dar formato</span>
<span class="t" style="left:1095.75px;top:191.00px;font-size:20.64px;color:#484848;transform:scaleX(0.9810);">como tabla</span>
<span class="t" style="left:1217.09px;top:165.00px;font-size:20.64px;color:#484848;transform:scaleX(0.9497);">Estilos de</span>
<span class="t" style="left:1227.98px;top:191.00px;font-size:20.64px;color:#484848;transform:scaleX(0.9426);">celda</span>
<span class="t" style="left:1316.74px;top:165.00px;font-size:20.64px;color:#484848;transform:scaleX(0.9802);">Insertar</span>
<span class="t" style="left:1391.87px;top:165.00px;font-size:20.64px;color:#484848;transform:scaleX(0.9652);">Eliminar</span>
<span class="t" style="left:1470.65px;top:165.00px;font-size:20.64px;color:#484848;transform:scaleX(0.9771);">Formato</span>
<span class="t" style="left:1591.16px;top:109.00px;font-size:20.64px;color:#484848;transform:scaleX(0.9623);">Autosuma</span>
<span class="t" style="left:1589.61px;top:142.00px;font-size:20.64px;color:#484848;transform:scaleX(0.9367);">Rellenar</span>
<span class="t" style="left:1589.59px;top:176.00px;font-size:20.64px;color:#484848;transform:scaleX(0.9527);">Borrar</span>
<span class="t" style="left:1711.16px;top:165.00px;font-size:20.64px;color:#484848;transform:scaleX(0.9664);">Ordenar y</span>
<span class="t" style="left:1725.10px;top:191.00px;font-size:20.64px;color:#484848;transform:scaleX(1.0300);">filtrar</span>
<span class="t" style="left:1826.03px;top:165.00px;font-size:20.64px;color:#484848;transform:scaleX(0.9268);">Buscar y</span>
<span class="t" style="left:1807.27px;top:191.00px;font-size:20.64px;color:#484848;transform:scaleX(0.9545);">seleccionar</span>
<svg class="b" style="left:0;top:262px" width="220" height="50" viewBox="0 262 220 50"><path d="M38.500 279.500l14.500 14M53 279.500l-14.500 14" stroke="#b4b4b4" stroke-width="1.800" fill="none"/><path d="M98.500 288l6.500 5.800 10.500-13" stroke="#bdbdbd" stroke-width="2.600" fill="none"/></svg>
<span class="t" style="left:158.43px;top:272.00px;font-size:24.00px;color:#666;transform:scaleX(1.0062);font-style:italic;font-family:'Liberation Serif',serif;">fx</span>
<div class="b" style="left:728.6px;top:239px;width:561.6px;height:860px;background:#fff;border:solid #557f6b;border-width:1.6px 2px 0 1.7px;box-shadow:1px 0 6px rgba(30,50,40,.32)"></div>
<div class="b" style="left:730.3px;top:1033.5px;width:561.6px;height:50px;background:#f4f4f4;border-top:1px solid #ececec"></div>
<div class="b" style="left:815px;top:527px;width:218px;height:46px;border-radius:23px;background:#fdfdfd"></div>
<div class="b" style="left:756.9px;top:790.7px;width:135.2px;height:52.9px;background:#c7e0f4"></div>
<svg class="b" style="left:0;top:0" width="1920" height="1080" viewBox="0 0 1920 1080"><path d="M1246.3 257.900l15 14.200M1261.300 257.900l-15 14.200" stroke="#5a5a5a" stroke-width="1.400" fill="none"/><circle cx="1219.6" cy="331.5" r="1.4" fill="#d2d2d2"/><circle cx="1229.3" cy="331.5" r="1.4" fill="#d2d2d2"/><circle cx="1239.0" cy="331.5" r="1.4" fill="#d2d2d2"/><line x1="757.00" y1="371.40" x2="1266.00" y2="371.40" stroke="#f8f8f8" stroke-width="1" /><g fill="none" stroke="#fcf1d6" stroke-width="1.500"><circle cx="795.3" cy="444.2" r="19.300"/><circle cx="798.500" cy="437" r="3.600"/><path d="M791.500 452.500c0-7 3-9 7-9s7 2 7 9"/><circle cx="788.500" cy="443.500" r="2.800"/><path d="M783.500 454c0-5 2-6.500 5-6.500"/></g><path d="M1210 439l8.800 8.500-8.800 8.500" fill="none" stroke="#dedede" stroke-width="1.400"/><circle cx="782.2" cy="548.2" r="23.200" fill="#e4d6e3"/><path d="M1006.600 542.600l19.600 18.600M1026.200 542.600l-19.600 18.600" stroke="#d4d4d4" stroke-width="1.600" fill="none"/><line x1="757.80" y1="649.30" x2="1240.30" y2="649.30" stroke="#dbe7f0" stroke-width="1.2" /><circle cx="998.4" cy="642.1" r="15.300" fill="#fff" stroke="#c9ddee" stroke-width="2"/><path d="M983.100 642.100a15.300 15.300 0 0 1 15.300-15.300" fill="none" stroke="#1a7fd4" stroke-width="2.600" stroke-linecap="round"/><circle cx="836.2" cy="918.3" r="36" fill="#fdfdfd"/><g fill="none" stroke="#dedede" stroke-width="2.300"><rect x="816" y="906.600" width="27.200" height="15" rx="7.500"/><rect x="828.800" y="914.400" width="25.800" height="15.200" rx="7.600"/></g><circle cx="977.8" cy="918.3" r="36" fill="#fdfdfd"/><rect x="975" y="907.500" width="22.500" height="19.500" fill="#fff" stroke="#dcdcdc" stroke-width="1.500"/><path d="M976 909l10.500 8 10.500-8" fill="none" stroke="#dcdcdc" stroke-width="1.500"/><path d="M957.600 902.500l24-3.800v39.300l-24-3.800z" fill="#d8d8d8"/><ellipse cx="969" cy="918.500" rx="4.800" ry="6" fill="none" stroke="#fff" stroke-width="2.800"/><g fill="#f4f4f4" stroke="#444" stroke-width="1.600" stroke-linejoin="round"><path d="M767 1080v-21.500h9.500"/><path d="M773 1084v-22h10.500l7 7v15z"/><path d="M783.500 1062v7h7" fill="none"/></g><path d="M969.800 1066l9.800 9.500 9.800-9.500" fill="none" stroke="#444" stroke-width="1.500"/></svg>
<span class="t" style="left:911.52px;top:317.00px;font-size:28.49px;color:#d9d9d9;transform:scaleX(0.9759);">Enviar vínculo</span>
<span class="t" style="left:829.02px;top:422.00px;font-size:21.66px;color:#dcdcdc;transform:scaleX(0.9066);">Solo las personas que especifiques</span>
<span class="t" style="left:829.60px;top:448.00px;font-size:21.66px;color:#dcdcdc;transform:scaleX(0.9198);">tendrán acceso de edición.</span>
<span class="t" style="left:768.75px;top:540.00px;font-size:18.75px;color:#fff;transform:scaleX(1.0072);">NP</span>
<span class="t" style="left:825.33px;top:537.00px;font-size:25.58px;color:#dedede;transform:scaleX(0.8933);">Naiara Padilla</span>
<span class="t" style="left:757.96px;top:610.00px;font-size:21.08px;color:#e4e4e4;transform:scaleX(0.9705);">Agregar otro</span>
<span class="t" style="left:906.42px;top:670.00px;font-size:25.00px;color:#333;transform:scaleX(0.9175);">Enviando correo...</span>
<span class="t" style="left:758.57px;top:694.00px;font-size:20.93px;color:#e2e2e2;transform:scaleX(0.9522);">Este es el libro que solicitó</span>
<span class="t" style="left:791.89px;top:807.00px;font-size:23.26px;color:#fff;transform:scaleX(0.9201);font-weight:bold;">Enviar</span>
<span class="t" style="left:776.78px;top:977.00px;font-size:19.91px;color:#e4e4e4;transform:scaleX(0.9205);">Copiar vínculo</span>
<span class="t" style="left:944.60px;top:977.00px;font-size:19.91px;color:#e4e4e4;transform:scaleX(0.9613);">Outlook</span>
<span class="t" style="left:805.97px;top:1061.00px;font-size:20.06px;color:#333;transform:scaleX(0.9296);font-weight:bold;">Enviar una copia</span>
<svg class="b" style="left:820px;top:800px" width="90" height="120" viewBox="820 800 90 120"><path d="M834.1 815.500V897.100L853 880.800 865.700 909.200 876.300 904.500 863.400 877.100H889.500z" fill="#fff" stroke="#000" stroke-width="5" stroke-linejoin="miter"/></svg>
</div>
</body></html>
